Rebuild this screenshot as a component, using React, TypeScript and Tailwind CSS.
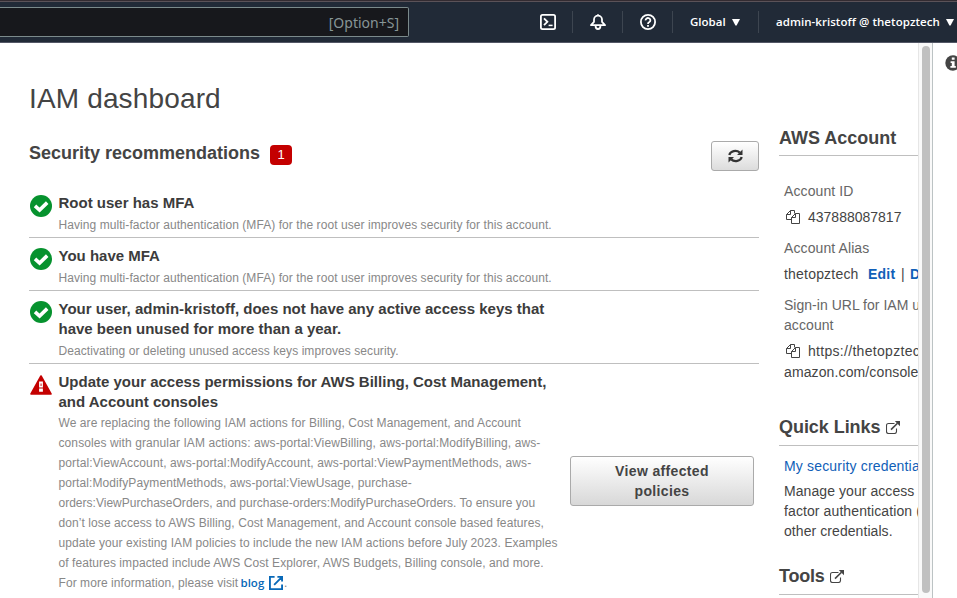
import React from "react";

function Check() {
  return (
    <svg width="22" height="22" viewBox="0 0 22 22" className="block shrink-0">
      <circle cx="11" cy="11" r="11" fill="#06922e" />
      <path d="M5 10.8 9.600 15 17.200 7.600" fill="none" stroke="#fff" strokeWidth="3.600" />
    </svg>
  );
}

function Warning() {
  return (
    <svg width="22" height="20" viewBox="0 0 22 20" className="block shrink-0">
      <path d="M11 1 21 19H1Z" fill="#c40000" stroke="#c40000" strokeWidth="1.6" strokeLinejoin="round" />
      <path d="M9.100 6.500h3.800v6H9.100zM9.100 13.600h3.800v3.200H9.100z" fill="#fff" />
      <path d="M10.600 8.500h.900v2.500h-.9z" fill="#c40000" />
    </svg>
  );
}

function Copy() {
  return (
    <svg width="14" height="14" viewBox="0 0 14 14" className="mr-[8px] ml-[2px] block shrink-0" fill="none" stroke="#444" strokeWidth="1">
      <path d="M5.500 9.500h-5v-5l4-4h4v3" />
      <path d="M4.500.500v4h-4" />
      <path d="M5.500 13.500v-6l4-4h4v10z" />
      <path d="M9.500 3.500v4h-4" />
    </svg>
  );
}

function External({ className }: { className: string }) {
  return (
    <svg width="15" height="13" viewBox="0 0 15 13" className={`block shrink-0 ${className}`} fill="none" stroke="#444">
      <path d="M8.500 2.500h-6q-2 0-2 2v6q0 2 2 2h6q2 0 2-2v-3" strokeWidth="1.1" />
      <path d="M5 8.600 11.500 2.200" strokeWidth="1.6" />
      <path d="M8.800 0H14v5.200z" fill="#444" stroke="none" />
    </svg>
  );
}

function Caret() {
  return (
    <svg width="8" height="7" viewBox="0 0 8 7" className="block shrink-0">
      <path d="M0 0h8L4.600 6.600H3.400z" fill="#fff" />
    </svg>
  );
}

function Line({ children, className = "" }: { children: React.ReactNode; className?: string }) {
  return (
    <div className={className}>
      <span>{children}</span>
    </div>
  );
}

function Header() {
  return (
    <header className="flex h-[43px] shrink-0 flex-col border-b border-[#535766] bg-[#212a37] font-['Open_Sans',sans-serif]">
      <div className="h-[2px] shrink-0 border-b border-[#5b5258] bg-[#332b31]" />
      <div className="flex h-[40px] items-center text-white">
        <div className="flex h-[30px] w-[409px] items-center justify-end rounded-r-[2px] border border-l-0 border-[#7b8a8b] bg-[#17181c] pr-[9px] font-['Noto_Sans',sans-serif] text-[14px] text-[#879596]">
          <span>[Option+S]</span>
        </div>
        <div className="ml-[131px] flex items-center">
          <svg width="16" height="16" viewBox="0 0 16 16" fill="none" stroke="#fff" strokeWidth="1.8">
            <rect x=".9" y=".9" width="14.2" height="14.2" rx="1.6" />
            <path d="m4 4.400 3.400 3.400L4 11.200" />
            <path d="M8.600 11.400h4" strokeWidth="1.5" />
          </svg>
          <div className="ml-[16px] h-[22px] w-px bg-[#3d4550]" />
          <svg width="16" height="16" viewBox="0 0 16 16" fill="none" stroke="#fff" strokeWidth="1.8" strokeLinejoin="round" className="ml-[17px]">
            <path d="M8 .2v1.600M1 11.200h14L12 7.800V5.600a4 4 0 0 0-8 0v2.200z" />
            <path d="M5.600 12c0 1.900 1 3 2.400 3s2.400-1.100 2.400-3" />
          </svg>
          <div className="ml-[16px] h-[22px] w-px bg-[#3d4550]" />
          <svg width="16" height="16" viewBox="0 0 16 16" fill="none" stroke="#fff" strokeWidth="1.8" className="ml-[17px]">
            <circle cx="8" cy="8" r="7.100" />
            <path d="M5.600 6.400a2.400 2.200 0 1 1 3.800 1.600Q8 8.600 8 9.900" />
            <path d="M8 10.900v1.900" />
          </svg>
          <div className="ml-[16px] h-[22px] w-px bg-[#3d4550]" />
        </div>
        <span className="ml-[17px] w-[36px] text-[11.5px] font-semibold whitespace-nowrap">Global</span>
        <div className="ml-[6px]"><Caret /></div>
        <div className="ml-[18px] h-[22px] w-px bg-[#3d4550]" />
        <span className="ml-[17px] w-[164px] text-[11.5px] font-semibold tracking-[0.05px] whitespace-nowrap">admin-kristoff @ thetopztech</span>
        <div className="ml-[6px]"><Caret /></div>
      </div>
    </header>
  );
}

const title = "text-[15px] leading-[20px] font-bold text-[#3c3c3c]";
const descBase = "text-[12px] leading-[20px] text-[#888]";
const desc = `${descBase} tracking-[0.068px]`;

export default function App() {
  return (
    <div className="flex h-[598px] w-[957px] flex-col overflow-hidden bg-white font-['Liberation_Sans',Arial,sans-serif] whitespace-nowrap text-[#444]">
      <Header />
      <div className="flex min-h-0 flex-1">
        <div className="flex w-[918px] shrink-0 overflow-hidden">
          <main className="ml-[29px] w-[730px] shrink-0">
            <h1 className="mt-[38px] text-[28px] leading-[36px] tracking-[0.15px]"><span>IAM dashboard</span></h1>
            <div className="mt-[24px] flex h-[30px] items-start">
              <h2 className="w-[241px] text-[18px] leading-[24px] font-bold">Security recommendations</h2>
              <div className="mt-[4px] flex h-[20px] w-[22px] items-center justify-center rounded-[4px] bg-[#c40000] text-[13px] text-white">1</div>
              <div className="ml-auto flex h-[30px] w-[48px] items-center justify-center rounded-[3px] border border-[#aaa] bg-linear-to-b from-white to-[#dcdcdc]">
                <svg width="15" height="14" viewBox="0 0 15 14" fill="none" stroke="#333" strokeWidth="2.2">
                  <path d="M1.300 6A6.100 5.200 0 0 1 11.800 3.600" />
                  <path d="M13.700 8A6.100 5.200 0 0 1 3.200 10.400" />
                  <path d="M14.500.500V6H9zM.500 13.500V8H6z" fill="#333" stroke="none" />
                </svg>
              </div>
            </div>
            <section className="mt-[14px]">
              {["Root user has MFA", "You have MFA"].map((t) => (
                <div key={t} className="flex h-[53px] border-b border-[#bfbfbf] pt-[8px]">
                  <div className="mt-[2px] ml-[1px] w-[28.5px]"><Check /></div>
                  <div>
                    <Line className={title}>{t}</Line>
                    <Line className={`${desc} mt-[2px]`}>Having multi-factor authentication (MFA) for the root user improves security for this account.</Line>
                  </div>
                </div>
              ))}
              <div className="flex h-[73px] border-b border-[#bfbfbf] pt-[8px]">
                <div className="mt-[2px] ml-[1px] w-[28.5px]"><Check /></div>
                <div>
                  <Line className={title}>Your user, admin-kristoff, does not have any active access keys that</Line>
                  <Line className={title}>have been unused for more than a year.</Line>
                  <Line className={`${desc} mt-[2px]`}>Deactivating or deleting unused access keys improves security.</Line>
                </div>
              </div>
              <div className="flex pt-[8px]">
                <div className="mt-[3px] ml-[1px] w-[28.5px]"><Warning /></div>
                <div className="w-[511.5px]">
                  <Line className={title}>Update your access permissions for AWS Billing, Cost Management,</Line>
                  <Line className={title}>and Account consoles</Line>
                  <div className="mt-[1px]">
                    <Line className={desc}>We are replacing the following IAM actions for Billing, Cost Management, and Account</Line>
                    <Line className={`${descBase} tracking-[0.095px]`}>consoles with granular IAM actions: aws-portal:ViewBilling, aws-portal:ModifyBilling, aws-</Line>
                    <Line className={`${descBase} tracking-[0.12px]`}>portal:ViewAccount, aws-portal:ModifyAccount, aws-portal:ViewPaymentMethods, aws-</Line>
                    <Line className={`${descBase} tracking-[0.09px]`}>portal:ModifyPaymentMethods, aws-portal:ViewUsage, purchase-</Line>
                    <Line className={`${descBase} tracking-[0.01px]`}>orders:ViewPurchaseOrders, and purchase-orders:ModifyPurchaseOrders. To ensure you</Line>
                    <Line className={`${descBase} tracking-[0.08px]`}>don’t lose access to AWS Billing, Cost Management, and Account console based features,</Line>
                    <Line className={desc}>update your existing IAM policies to include the new IAM actions before July 2023. Examples</Line>
                    <Line className={desc}>of features impacted include AWS Cost Explorer, AWS Budgets, Billing console, and more.</Line>
                    <div className={`${descBase} flex items-center`}>
                      <span className="w-[182px] tracking-[0.068px]">For more information, please visit</span>
                      <span className="w-[28.5px] font-['Open_Sans',sans-serif] text-[11.5px] font-semibold text-[#0969b8]">blog</span>
                      <svg width="14" height="14" viewBox="0 0 15 15" fill="none" stroke="#0969b8" strokeWidth="2">
                        <path d="M6 1H1v13h13V9M9 1h5v5M14 1 5.500 9.500" />
                      </svg>
                      <span className="ml-px">.</span>
                    </div>
                  </div>
                </div>
                <button className="mt-[84px] h-[50px] w-[184px] rounded-[3px] border border-[#aaa] bg-linear-to-b from-white to-[#d8d8d8] text-[14px] leading-[20px] font-bold tracking-[0.35px]">
                  <span className="block">View affected</span>
                  <span className="block">policies</span>
                </button>
              </div>
            </section>
          </main>
          <aside className="ml-[20px] w-[200px] shrink-0">
            <div className="mt-[83px] h-[30px] border-b border-[#bfbfbf] text-[18px] leading-[24px] font-bold">AWS Account</div>
            <div className="pl-[5px] text-[14px] leading-[20px] tracking-[0.12px]">
              <div className="mt-[25px] tracking-[0.1px] text-[#666]">Account ID</div>
              <div className="mt-[6px] flex items-center"><Copy /><span className="tracking-normal">437888087817</span></div>
              <div className="mt-[11px] tracking-[0.1px] text-[#666]">Account Alias</div>
              <div className="mt-[6px] flex">
                <span className="w-[84px] tracking-[0.2px]">thetopztech</span>
                <span className="w-[33px] font-bold tracking-[0.2px] text-[#1160b8]">Edit</span>
                <span className="w-[9px]">|</span>
                <span className="font-bold text-[#1160b8]">Delete</span>
              </div>
              <div className="mt-[11px] tracking-[0.02px] text-[#666]">Sign-in URL for IAM users in this</div>
              <div className="tracking-[0.08px] text-[#666]">account</div>
              <div className="mt-[6px] flex items-center tracking-[0.3px]"><Copy />https://thetopztech.signin.aws.</div>
              <div className="mt-[1px]">amazon.com/console</div>
            </div>
            <div className="mt-[32px] flex h-[32px] items-center border-b border-[#bfbfbf] pb-[4px] text-[18px] font-bold">
              <span className="tracking-[-0.05px]">Quick Links</span>
              <External className="ml-[6px]" />
            </div>
            <div className="pl-[5px] text-[14px] leading-[20px] tracking-[0.07px]">
              <div className="mt-[10px] tracking-[0.17px] text-[#1160b8]">My security credentials</div>
              <div className="mt-[5px]">Manage your access keys, multi-</div>
              <div className="tracking-[0.1px]">factor authentication (MFA) and</div>
              <div>other credentials.</div>
            </div>
            <div className="mt-[21px] flex h-[33px] items-center border-b border-[#bfbfbf] pb-[3px] text-[18px] font-bold">
              <span className="w-[51px] tracking-[-0.2px]">Tools</span>
              <External className="ml-0" />
            </div>
          </aside>
        </div>
        <div className="flex w-[15px] shrink-0 justify-center border-r border-l border-r-[#bcc3c4] border-l-[#e6e6e6] bg-[#f9f9f9] pt-[3px]">
          <div className="h-[547px] w-[8px] rounded-full bg-[#c0c0c0]" />
        </div>
        <div className="w-[24px] overflow-hidden pt-[12px] pl-[12px]">
          <svg width="16" height="16" viewBox="0 0 16 16">
            <circle cx="8" cy="8" r="7.700" fill="#444" />
            <path d="M6.800 2.600h2.800v2.200H6.800zM5.600 6.200h4v4.800h1.200v1.800H5.400V11h1.400V8H5.600z" fill="#fff" />
          </svg>
        </div>
      </div>
    </div>
  );
}
